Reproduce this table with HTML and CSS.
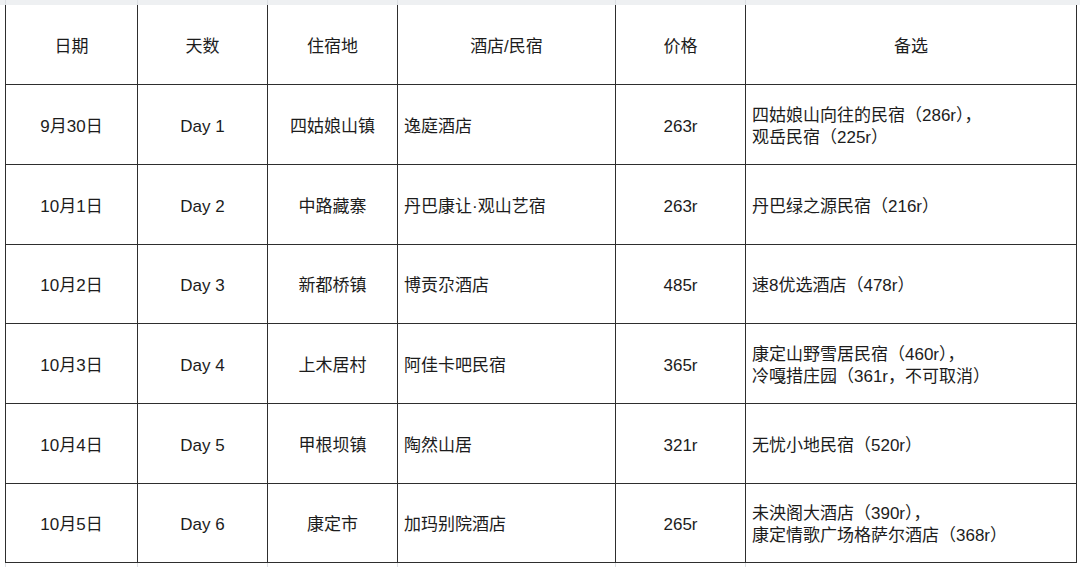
FILE: index.html
```html
<!DOCTYPE html>
<html lang="zh">
<head>
<meta charset="utf-8">
<link rel="stylesheet" href="styles.css">
</head>
<body>
<div class="band band-top">
  <span></span><span></span><span></span><span></span><span></span><span></span>
</div>
<table class="sheet">
  <colgroup>
    <col class="c1"><col class="c2"><col class="c3"><col class="c4"><col class="c5"><col class="c6">
  </colgroup>
  <tr class="head">
    <td class="ctr">日期</td><td class="ctr">天数</td><td class="ctr">住宿地</td><td class="ctr">酒店/民宿</td><td class="ctr">价格</td><td class="ctr">备选</td>
  </tr>
  <tr class="r80">
    <td class="ctr">9月30日</td><td class="ctr">Day 1</td><td class="ctr">四姑娘山镇</td><td class="lft">逸庭酒店</td><td class="ctr">263r</td><td class="lft">四姑娘山向往的民宿（286r），<br>观岳民宿（225r）</td>
  </tr>
  <tr class="r80">
    <td class="ctr">10月1日</td><td class="ctr">Day 2</td><td class="ctr">中路藏寨</td><td class="lft">丹巴康让·观山艺宿</td><td class="ctr">263r</td><td class="lft">丹巴绿之源民宿（216r）</td>
  </tr>
  <tr class="r79">
    <td class="ctr">10月2日</td><td class="ctr">Day 3</td><td class="ctr">新都桥镇</td><td class="lft">博贡尕酒店</td><td class="ctr">485r</td><td class="lft">速8优选酒店（478r）</td>
  </tr>
  <tr class="r80">
    <td class="ctr">10月3日</td><td class="ctr">Day 4</td><td class="ctr">上木居村</td><td class="lft">阿佳卡吧民宿</td><td class="ctr">365r</td><td class="lft">康定山野雪居民宿（460r），<br>冷嘎措庄园（361r，不可取消）</td>
  </tr>
  <tr class="r80">
    <td class="ctr">10月4日</td><td class="ctr">Day 5</td><td class="ctr">甲根坝镇</td><td class="lft">陶然山居</td><td class="ctr">321r</td><td class="lft">无忧小地民宿（520r）</td>
  </tr>
  <tr class="r79">
    <td class="ctr">10月5日</td><td class="ctr">Day 6</td><td class="ctr">康定市</td><td class="lft">加玛别院酒店</td><td class="ctr">265r</td><td class="lft">未泱阁大酒店（390r），<br>康定情歌广场格萨尔酒店（368r）</td>
  </tr>
</table>
<div class="band band-bottom">
  <span></span><span></span><span></span><span></span><span></span><span></span>
</div>
</body>
</html>
```

FILE: styles.css
```css
html, body {
  margin: 0;
  padding: 0;
  background: #ffffff;
}

body {
  font-family: "Liberation Sans", "Noto Sans CJK SC", sans-serif;
  font-size: 17px;
  color: #1c1c1c;
  width: 1080px;
  height: 567px;
  overflow: hidden;
}

.band {
  display: grid;
  grid-template-columns: 5px 132px 130px 130px 218px 130px 331px 4px;
  height: 5px;
}

.band-top {
  background: #eef0f2;
}

.band-bottom {
  background: #ffffff;
}

.band span {
  border-left: 1px solid #dcdfe3;
}

.band span:first-child {
  grid-column: 2;
}

.sheet {
  border-collapse: collapse;
  table-layout: fixed;
  width: 1071px;
  margin-left: 5px;
}

.c1 { width: 132px; }
.c2 { width: 130px; }
.c3 { width: 130px; }
.c4 { width: 218px; }
.c5 { width: 130px; }
.c6 { width: 331px; }

.sheet td {
  border: 1px solid #2e2e2e;
  padding: 4px 6px 0 6px;
  line-height: 22px;
  vertical-align: middle;
  white-space: nowrap;
}

.sheet tr.head td {
  border-top: none;
  height: 75px;
}

.sheet tr.r80 td {
  height: 75px;
}

.sheet tr.r79 td {
  height: 74px;
}

.ctr {
  text-align: center;
}

.lft {
  text-align: left;
}
```
